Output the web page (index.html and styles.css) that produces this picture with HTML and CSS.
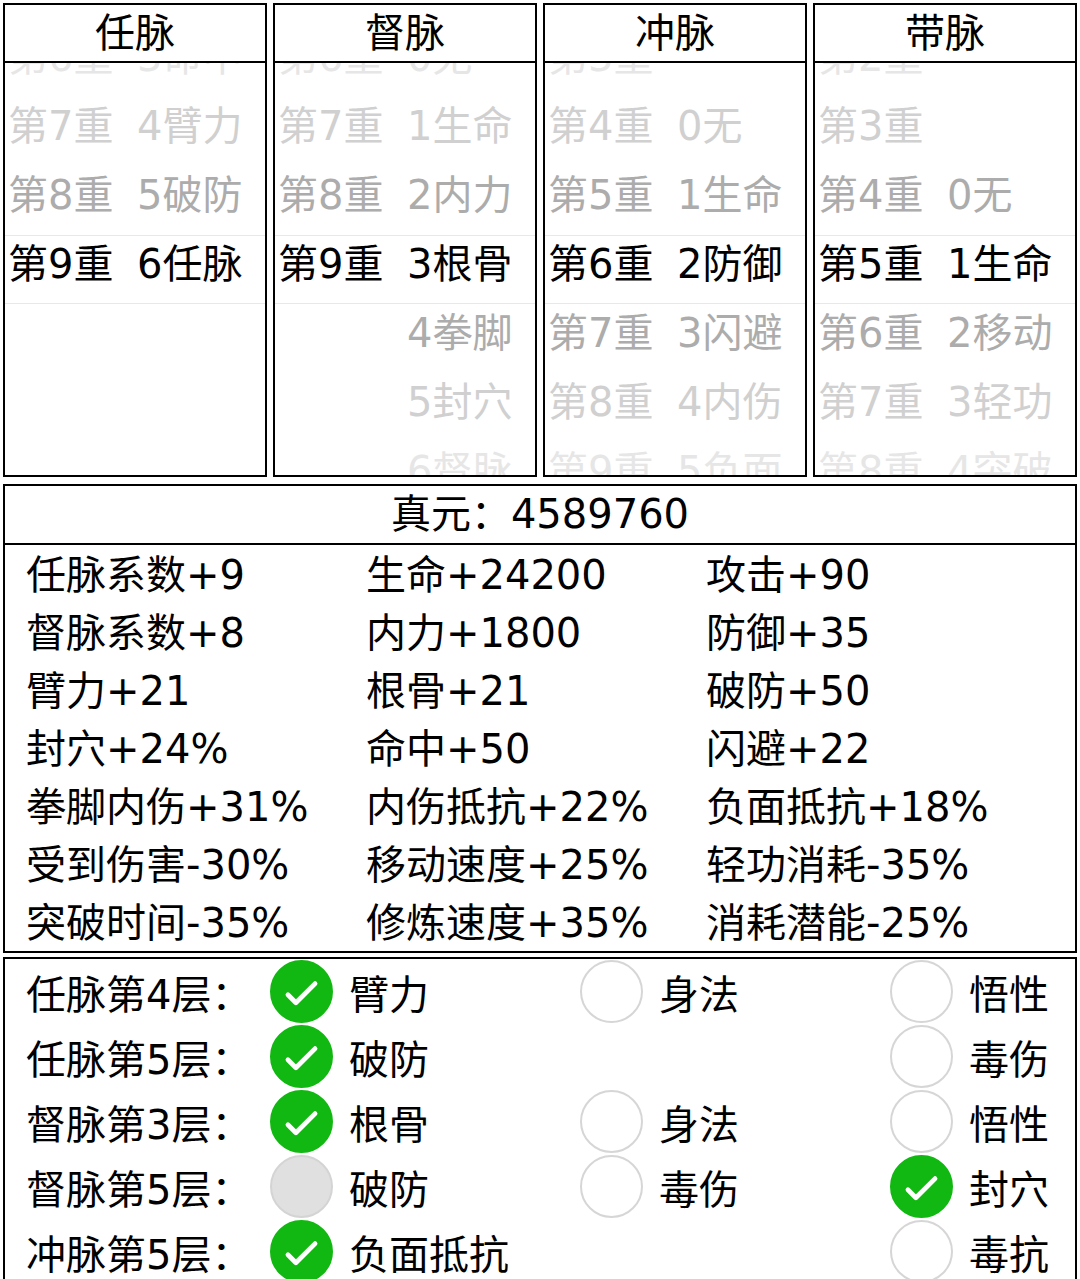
FILE: index.html
```html
<!DOCTYPE html>
<html lang="zh">
<head>
<meta charset="utf-8">
<title>经脉</title>
<link rel="stylesheet" href="styles.css">
</head>
<body>
<div class="page">
  <div class="wheels">
    <div class="wheel">
      <div class="wheel-title">任脉</div>
      <div class="wheel-body">
        <div class="band"></div>
        <div class="rows">
          <div class="row d3"><span class="lv">第6重</span><span class="at">3命中</span></div>
          <div class="row d2"><span class="lv">第7重</span><span class="at">4臂力</span></div>
          <div class="row d1"><span class="lv">第8重</span><span class="at">5破防</span></div>
          <div class="row d0"><span class="lv">第9重</span><span class="at">6任脉</span></div>
          <div class="row d1"><span class="lv"></span><span class="at"></span></div>
          <div class="row d2"><span class="lv"></span><span class="at"></span></div>
          <div class="row d3"><span class="lv"></span><span class="at"></span></div>
        </div>
      </div>
    </div>
    <div class="wheel">
      <div class="wheel-title">督脉</div>
      <div class="wheel-body">
        <div class="band"></div>
        <div class="rows">
          <div class="row d3"><span class="lv">第6重</span><span class="at">0无</span></div>
          <div class="row d2"><span class="lv">第7重</span><span class="at">1生命</span></div>
          <div class="row d1"><span class="lv">第8重</span><span class="at">2内力</span></div>
          <div class="row d0"><span class="lv">第9重</span><span class="at">3根骨</span></div>
          <div class="row d1"><span class="lv"></span><span class="at">4拳脚</span></div>
          <div class="row d2"><span class="lv"></span><span class="at">5封穴</span></div>
          <div class="row d3"><span class="lv"></span><span class="at">6督脉</span></div>
        </div>
      </div>
    </div>
    <div class="wheel">
      <div class="wheel-title">冲脉</div>
      <div class="wheel-body">
        <div class="band"></div>
        <div class="rows">
          <div class="row d3"><span class="lv">第3重</span><span class="at"></span></div>
          <div class="row d2"><span class="lv">第4重</span><span class="at">0无</span></div>
          <div class="row d1"><span class="lv">第5重</span><span class="at">1生命</span></div>
          <div class="row d0"><span class="lv">第6重</span><span class="at">2防御</span></div>
          <div class="row d1"><span class="lv">第7重</span><span class="at">3闪避</span></div>
          <div class="row d2"><span class="lv">第8重</span><span class="at">4内伤</span></div>
          <div class="row d3"><span class="lv">第9重</span><span class="at">5负面</span></div>
        </div>
      </div>
    </div>
    <div class="wheel">
      <div class="wheel-title">带脉</div>
      <div class="wheel-body">
        <div class="band"></div>
        <div class="rows">
          <div class="row d3"><span class="lv">第2重</span><span class="at"></span></div>
          <div class="row d2"><span class="lv">第3重</span><span class="at"></span></div>
          <div class="row d1"><span class="lv">第4重</span><span class="at">0无</span></div>
          <div class="row d0"><span class="lv">第5重</span><span class="at">1生命</span></div>
          <div class="row d1"><span class="lv">第6重</span><span class="at">2移动</span></div>
          <div class="row d2"><span class="lv">第7重</span><span class="at">3轻功</span></div>
          <div class="row d3"><span class="lv">第8重</span><span class="at">4突破</span></div>
        </div>
      </div>
    </div>
  </div>

  <section class="stats">
    <div class="stats-title">真元：4589760</div>
    <div class="stats-grid">
      <div>任脉系数+9</div><div>生命+24200</div><div>攻击+90</div>
      <div>督脉系数+8</div><div>内力+1800</div><div>防御+35</div>
      <div>臂力+21</div><div>根骨+21</div><div>破防+50</div>
      <div>封穴+24%</div><div>命中+50</div><div>闪避+22</div>
      <div>拳脚内伤+31%</div><div>内伤抵抗+22%</div><div>负面抵抗+18%</div>
      <div>受到伤害-30%</div><div>移动速度+25%</div><div>轻功消耗-35%</div>
      <div>突破时间-35%</div><div>修炼速度+35%</div><div>消耗潜能-25%</div>
    </div>
  </section>

  <section class="picks">
    <div class="pick-row">
      <div class="pick-label">任脉第4层：</div>
      <div class="opt"><span class="dot on"><svg viewBox="0 0 63 63"><path d="M17 35 L25.5 43.5 L46 23"/></svg></span><span>臂力</span></div>
      <div class="opt"><span class="dot"></span><span>身法</span></div>
      <div class="opt"><span class="dot"></span><span>悟性</span></div>
    </div>
    <div class="pick-row">
      <div class="pick-label">任脉第5层：</div>
      <div class="opt"><span class="dot on"><svg viewBox="0 0 63 63"><path d="M17 35 L25.5 43.5 L46 23"/></svg></span><span>破防</span></div>
      <div class="opt"></div>
      <div class="opt"><span class="dot"></span><span>毒伤</span></div>
    </div>
    <div class="pick-row">
      <div class="pick-label">督脉第3层：</div>
      <div class="opt"><span class="dot on"><svg viewBox="0 0 63 63"><path d="M17 35 L25.5 43.5 L46 23"/></svg></span><span>根骨</span></div>
      <div class="opt"><span class="dot"></span><span>身法</span></div>
      <div class="opt"><span class="dot"></span><span>悟性</span></div>
    </div>
    <div class="pick-row">
      <div class="pick-label">督脉第5层：</div>
      <div class="opt"><span class="dot off"></span><span>破防</span></div>
      <div class="opt"><span class="dot"></span><span>毒伤</span></div>
      <div class="opt"><span class="dot on"><svg viewBox="0 0 63 63"><path d="M17 35 L25.5 43.5 L46 23"/></svg></span><span>封穴</span></div>
    </div>
    <div class="pick-row">
      <div class="pick-label">冲脉第5层：</div>
      <div class="opt"><span class="dot on"><svg viewBox="0 0 63 63"><path d="M17 35 L25.5 43.5 L46 23"/></svg></span><span>负面抵抗</span></div>
      <div class="opt"></div>
      <div class="opt"><span class="dot"></span><span>毒抗</span></div>
    </div>
  </section>
</div>
</body>
</html>
```

FILE: styles.css
```css
html, body {
  margin: 0;
  padding: 0;
  background: #fff;
}

body {
  font-family: "DejaVu Sans", "Noto Sans CJK SC", sans-serif;
  font-size: 40px;
  color: #000;
}

.page {
  padding: 3px 3px 0 3px;
}

/* ---------- wheels ---------- */
.wheels {
  display: flex;
  gap: 6px;
  height: 474px;
}

.wheel {
  flex: 1;
  min-width: 0;
  border: 2px solid #000;
  display: flex;
  flex-direction: column;
}

.wheel-title {
  height: 56px;
  line-height: 56px;
  text-align: center;
  border-bottom: 2px solid #000;
  font-size: 40px;
}

.wheel-body {
  flex: 1;
  position: relative;
  overflow: hidden;
}

.band {
  position: absolute;
  left: 0;
  right: 0;
  top: 172px;
  height: 67px;
  border-top: 1px solid #e8e8e8;
  border-bottom: 1px solid #e8e8e8;
}

.rows {
  margin-top: -40px;
  padding-left: 3px;
}

.row {
  display: flex;
  height: 69px;
  line-height: 69px;
  white-space: nowrap;
}

.lv {
  width: 129px;
  flex: none;
}

.d0 { color: #000; }
.d1 { color: #acacac; }
.d2 { color: #d0d0d0; }
.d3 { color: #e6e6e6; }

/* ---------- stats ---------- */
.stats {
  margin-top: 7px;
  border: 2px solid #000;
}

.stats-title {
  height: 57px;
  line-height: 57px;
  text-align: center;
  border-bottom: 2px solid #000;
}

.stats-grid {
  display: grid;
  grid-template-columns: 340px 340px 1fr;
  padding-left: 21px;
}

.stats-grid > div {
  height: 58px;
  line-height: 60px;
  white-space: nowrap;
}

/* ---------- picks ---------- */
.picks {
  margin-top: 4px;
  border: 2px solid #000;
  border-bottom: none;
  padding-left: 21px;
}

.pick-row {
  display: grid;
  grid-template-columns: 244px 310px 310px 1fr;
  height: 65px;
  align-items: center;
}

.pick-label {
  white-space: nowrap;
}

.opt {
  display: flex;
  align-items: center;
  gap: 16px;
  white-space: nowrap;
}

.dot {
  width: 63px;
  height: 63px;
  box-sizing: border-box;
  border-radius: 50%;
  border: 2px solid #d6d6d6;
  background: #fff;
  flex: none;
  display: block;
}

.dot.on {
  background: #11b811;
  border-color: #11b811;
}

.dot.off {
  background: #e0e0e0;
  border-color: #d4d4d4;
}

.dot svg {
  display: block;
  width: 59px;
  height: 59px;
}

.dot svg path {
  fill: none;
  stroke: #fff;
  stroke-width: 5;
  stroke-linecap: round;
  stroke-linejoin: round;
}
```
